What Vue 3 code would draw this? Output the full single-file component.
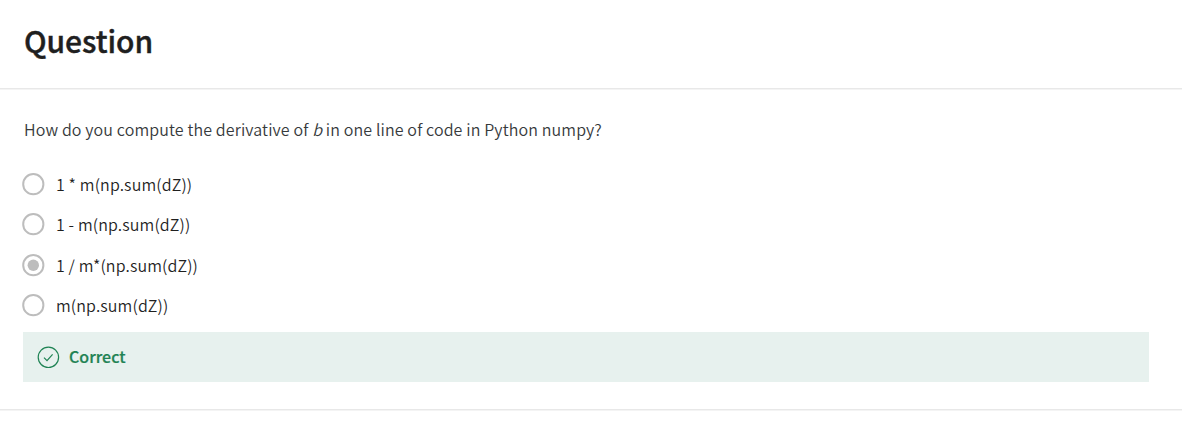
<script setup>
const options = [
  { text: '1 * m(np.sum(dZ))', selected: false },
  { text: '1 - m(np.sum(dZ))', selected: false },
  { text: '1 / m*(np.sum(dZ))', selected: true },
  { text: 'm(np.sum(dZ))', selected: false },
]
</script>

<template>
  <main class="page">
    <header class="header">
      <h1 class="title">Question</h1>
    </header>
    <section class="body">
      <p class="prompt">How do you compute the derivative of <em>b</em> in one line of code in Python numpy?</p>
      <ul class="options">
        <li v-for="(option, i) in options" :key="i" class="option">
          <svg class="radio" width="24" height="24" viewBox="0 0 24 24">
            <circle cx="12.3" cy="12.2" r="10.1" fill="none" stroke="#bdbdbd" stroke-width="2" />
            <circle v-if="option.selected" cx="12.3" cy="12.2" r="5.7" fill="#bdbdbd" />
          </svg>
          <span>{{ option.text }}</span>
        </li>
      </ul>
      <div class="feedback">
        <svg class="check" width="24" height="24" viewBox="0 0 24 24" fill="none" stroke="#1f8354">
          <circle cx="12.4" cy="12.3" r="10.2" stroke-width="1.2" />
          <path d="M8 12.6l3 3 5.6-6.3" stroke-width="1.2" />
        </svg>
        <strong>Correct</strong>
      </div>
    </section>
  </main>
</template>

<style>
body {
  background: #fff;
}
</style>

<style scoped>
.page {
  height: 430px;
  box-sizing: border-box;
  overflow: hidden;
  font-family: "Noto Sans CJK SC", "Noto Sans", sans-serif;
  color: #1f1f1f;
  font-size: 16px;
}
.header {
  height: 90px;
  box-sizing: border-box;
  padding: 16px 24px 0;
  border-bottom: 1px solid #f4f4f4;
  box-shadow: inset 0 -1px #e8e8e8;
}
.title {
  margin: 0;
  font-size: 30px;
  line-height: 48px;
  font-weight: 500;
  letter-spacing: -0.06px;
  -webkit-text-stroke: 0.4px currentColor;
}
.body {
  height: 321px;
  box-sizing: border-box;
  padding: 27px 33px 0 23px;
  border-bottom: 1px solid #f4f4f4;
  box-shadow: inset 0 -1px #e8e8e8;
}
.prompt {
  margin: 0 0 23px;
  padding-left: 1px;
  line-height: 24px;
  color: #373a3c;
  font-weight: 350;
  white-space: pre;
  letter-spacing: 0.13px;
}
.options {
  list-style: none;
  margin: 0;
  padding: 0;
}
.option {
  display: flex;
  align-items: center;
  gap: 11px;
  height: 40.3px;
  margin-left: -2px;
  font-weight: 350;
  letter-spacing: 0.13px;
}
.radio,
.check {
  display: block;
  flex: none;
}
.feedback {
  display: flex;
  align-items: center;
  gap: 9px;
  height: 50px;
  margin-top: 7px;
  padding-left: 13px;
  background: #e7f1ee;
  color: #1f8354;
}
.feedback strong {
  margin-top: -2px;
  font-weight: 500;
  -webkit-text-stroke: 0.2px currentColor;
}
</style>
